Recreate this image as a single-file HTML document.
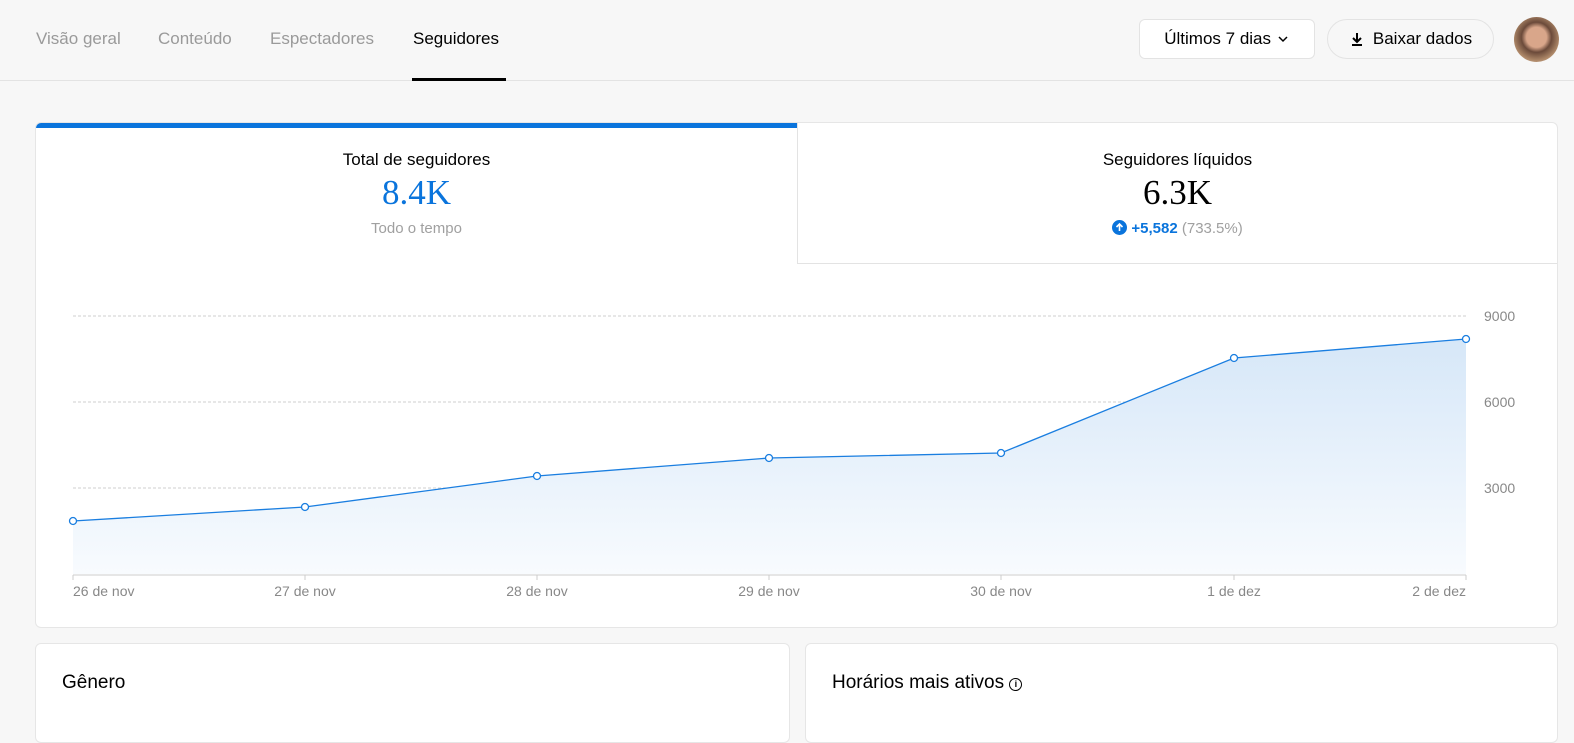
<!DOCTYPE html>
<html><head><meta charset="utf-8"><style>
*{box-sizing:border-box;margin:0;padding:0}
body{width:1574px;height:717px;overflow:hidden;background:#f7f7f7;font-family:"Liberation Sans",sans-serif;position:relative;color:#000}
.hdr{position:absolute;left:0;top:0;width:1574px;height:81px;border-bottom:1px solid #e3e3e3;background:#f7f7f7}
.tab{position:absolute;top:29px;font-size:17px;color:#9a9a9a}
.btn{position:absolute;top:19px;height:40px;border:1px solid #e3e3e3;background:#fff;font-size:17px;display:flex;align-items:center;justify-content:center}
.card{position:absolute;background:#fff;border:1px solid #e6e6e6;border-radius:6px}
.c{position:absolute;text-align:center;width:761px}
</style></head><body>
<div class="hdr">
<div class="tab" style="left:36px">Visão geral</div>
<div class="tab" style="left:158px">Conteúdo</div>
<div class="tab" style="left:270px">Espectadores</div>
<div class="tab" style="left:413px;color:#000">Seguidores</div>
<div style="position:absolute;left:412px;top:78px;width:94px;height:3px;background:#000"></div>
<div class="btn" style="left:1139px;width:176px;border-radius:6px">Últimos 7 dias&nbsp;<svg width="14" height="10" viewBox="0 0 14 10"><path d="M3 3l4 4 4-4" fill="none" stroke="#000" stroke-width="1.5"/></svg></div>
<div class="btn" style="left:1327px;width:167px;border-radius:20px;background:#f7f7f7"><svg width="16" height="16" viewBox="0 0 16 16" style="margin-right:8px"><path d="M8 2v9M4 7l4 4 4-4M3 14h10" fill="none" stroke="#000" stroke-width="2"/></svg>Baixar dados</div>
<div style="position:absolute;left:1514px;top:17px;width:45px;height:45px;border-radius:50%;background:radial-gradient(circle at 50% 45%,#d9a68a 0 30%,#6b4a3a 45%,#b08a6a 70%,#d8c8b8)"></div>
</div>
<div class="card" style="left:35px;top:122px;width:1523px;height:506px;overflow:hidden">
<div style="position:absolute;left:0;top:0;width:762px;height:5px;background:#0a74dc"></div>
<div style="position:absolute;left:761px;top:-1px;width:763px;height:142px;border-left:1px solid #e3e3e3;border-bottom:1px solid #e3e3e3"></div>
<div class="c" style="left:0;top:27px;font-size:17px">Total de seguidores</div>
<div class="c" style="left:0;top:50px;font-size:35px;font-family:'Liberation Serif',serif;color:#0a74dc">8.4K</div>
<div class="c" style="left:0;top:97px;font-size:15px;color:#a0a0a0">Todo o tempo</div>
<div class="c" style="left:761px;top:27px;font-size:17px">Seguidores líquidos</div>
<div class="c" style="left:761px;top:50px;font-size:35px;font-family:'Liberation Serif',serif">6.3K</div>
<div class="c" style="left:761px;top:97px;font-size:15px;color:#a0a0a0"><span style="display:inline-block;width:15px;height:15px;border-radius:50%;background:#0a74dc;vertical-align:-2px;position:relative"><svg width="15" height="15" viewBox="0 0 15 15" style="position:absolute;left:0;top:0"><path d="M7.5 11V4M4.5 7l3-3 3 3" fill="none" stroke="#fff" stroke-width="1.6"/></svg></span> <b style="color:#0a74dc;font-weight:bold">+5,582</b> (733.5%)</div>
</div>
<svg style="position:absolute;left:0;top:0" width="1574" height="717">
<defs><linearGradient id="g" x1="0" y1="0" x2="0" y2="1"><stop offset="0" stop-color="#d6e7f8"/><stop offset="1" stop-color="#f8fbfe"/></linearGradient></defs>
<g stroke="#cfcfcf" stroke-dasharray="3,2"><line x1="73" y1="316" x2="1466" y2="316"/><line x1="73" y1="402" x2="1466" y2="402"/><line x1="73" y1="488" x2="1466" y2="488"/></g>
<path d="M73 521L305 507L537 476L769 458L1001 453L1234 358L1466 339V574H73Z" fill="url(#g)"/>
<line x1="73" y1="575" x2="1466" y2="575" stroke="#ccc"/>
<path d="M73 521L305 507L537 476L769 458L1001 453L1234 358L1466 339" fill="none" stroke="#1a7ee0" stroke-width="1.3"/>
<g fill="#fff" stroke="#1a7ee0" stroke-width="1.3"><circle cx="73" cy="521" r="3.5"/><circle cx="305" cy="507" r="3.5"/><circle cx="537" cy="476" r="3.5"/><circle cx="769" cy="458" r="3.5"/><circle cx="1001" cy="453" r="3.5"/><circle cx="1234" cy="358" r="3.5"/><circle cx="1466" cy="339" r="3.5"/></g>
<g font-family="Liberation Sans" font-size="14" fill="#888"><text x="1484" y="321">9000</text><text x="1484" y="407">6000</text><text x="1484" y="493">3000</text>
<text x="73" y="596">26 de nov</text><text x="305" y="596" text-anchor="middle">27 de nov</text><text x="537" y="596" text-anchor="middle">28 de nov</text><text x="769" y="596" text-anchor="middle">29 de nov</text><text x="1001" y="596" text-anchor="middle">30 de nov</text><text x="1234" y="596" text-anchor="middle">1 de dez</text><text x="1466" y="596" text-anchor="end">2 de dez</text></g>
<g stroke="#ccc"><line x1="73" y1="575" x2="73" y2="580"/><line x1="305" y1="575" x2="305" y2="580"/><line x1="537" y1="575" x2="537" y2="580"/><line x1="769" y1="575" x2="769" y2="580"/><line x1="1001" y1="575" x2="1001" y2="580"/><line x1="1234" y1="575" x2="1234" y2="580"/><line x1="1466" y1="575" x2="1466" y2="580"/></g>
</svg>
<div class="card" style="left:35px;top:643px;width:755px;height:100px"><div style="position:absolute;left:26px;top:28px;font-size:19px">Gênero</div></div>
<div class="card" style="left:805px;top:643px;width:753px;height:100px"><div style="position:absolute;left:26px;top:28px;font-size:19px">Horários mais ativos <span style="display:inline-block;width:13px;height:13px;border:1.5px solid #000;border-radius:50%;font-size:9px;text-align:center;line-height:10px;vertical-align:1px;font-weight:bold">i</span></div></div>
</body></html>
